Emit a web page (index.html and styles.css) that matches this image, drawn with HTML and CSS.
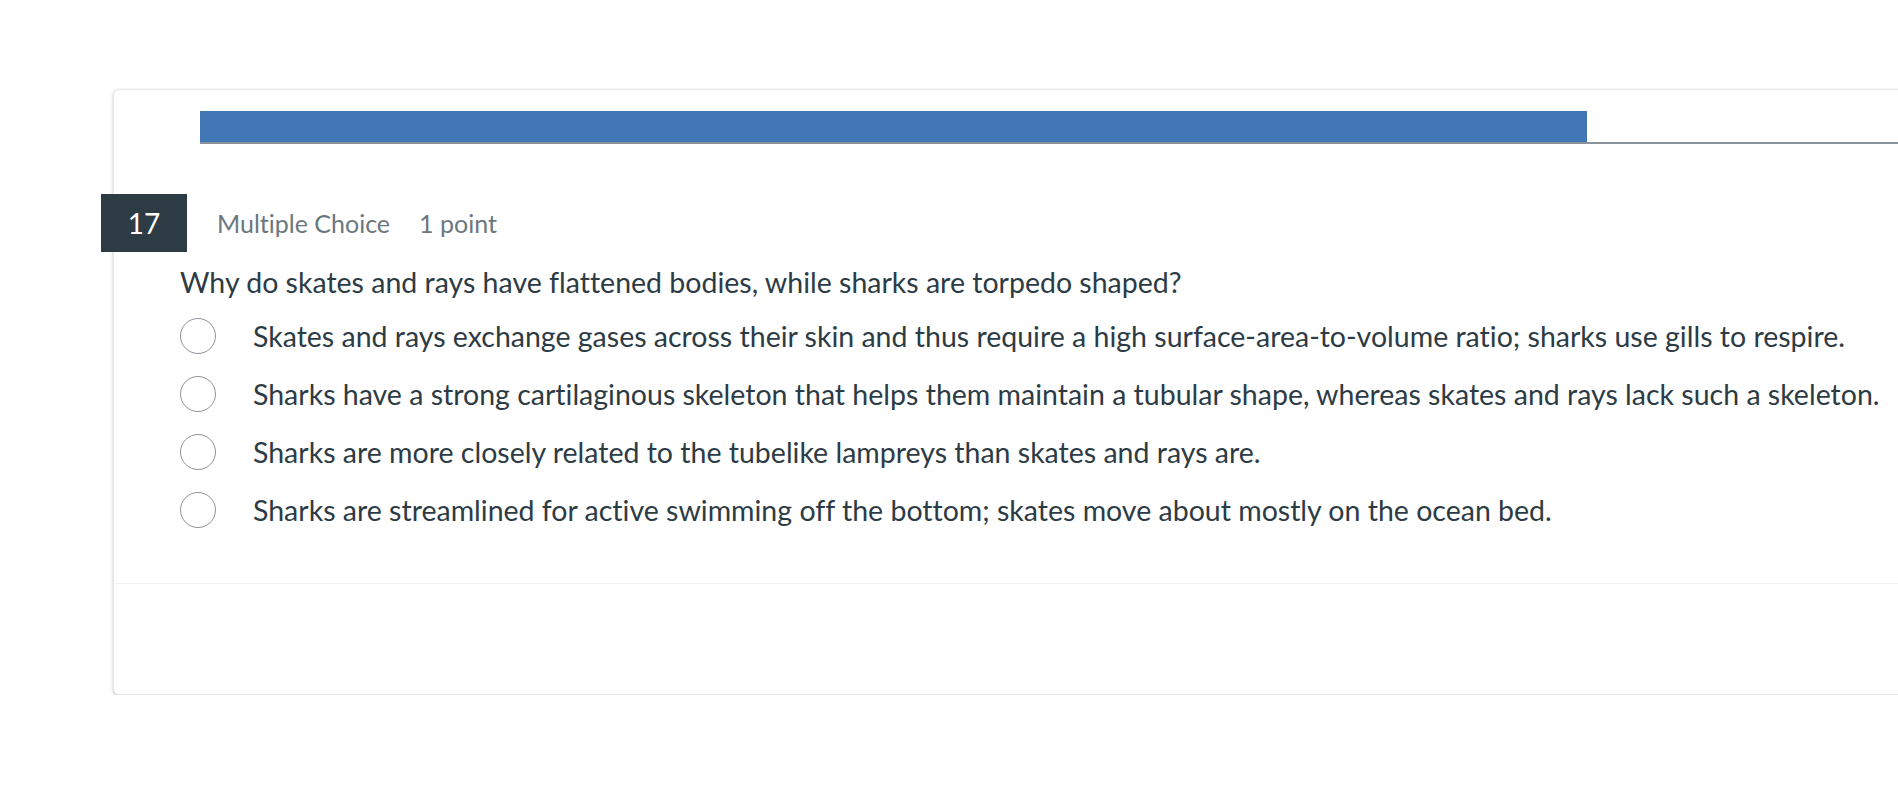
FILE: index.html
```html
<!DOCTYPE html>
<html lang="en">
<head>
    <meta charset="UTF-8">
    <title>Quiz - Question 17</title>
    <link rel="stylesheet" href="styles.css">
</head>
<body>

<div class="card">
    <div class="progress">
        <div class="progress-fill" style="width: 1387px;"></div>
    </div>

    <div class="question">
        <div class="question-header">
            <span class="number">17</span>
            <span class="meta">Multiple Choice</span>
            <span class="meta">1 point</span>
        </div>
        <p class="question-text">Why do skates and rays have flattened bodies, while sharks are torpedo shaped?</p>
        <ul class="answers">
            <li><span class="radio"></span>Skates and rays exchange gases across their skin and thus require a high surface-area-to-volume ratio; sharks use gills to respire.</li>
            <li><span class="radio"></span>Sharks have a strong cartilaginous skeleton that helps them maintain a tubular shape, whereas skates and rays lack such a skeleton.</li>
            <li><span class="radio"></span>Sharks are more closely related to the tubelike lampreys than skates and rays are.</li>
            <li><span class="radio"></span>Sharks are streamlined for active swimming off the bottom; skates move about mostly on the ocean bed.</li>
        </ul>
    </div>

    <div class="card-footer"></div>
</div>

</body>
</html>
```

FILE: styles.css
```css
body {
    font-family: Lato, "Open Sans", sans-serif;
    font-variant-ligatures: no-common-ligatures;
    background-color: #ffffff;
    color: #2d3b45;
    margin: 0;
    padding: 0;
    overflow: hidden;
}
.card {
    margin: 89px -40px 0 113px;
    border: 1px solid #e6e7e9;
    border-radius: 6px;
    box-shadow: 0 1px 3px rgba(0, 0, 0, 0.25);
    background: white;
}
.progress {
    margin: 21px 0 0 86px;
    height: 31px;
    border-bottom: 2px solid #8b9299;
}
.progress-fill {
    height: 31px;
    background-color: #4277b6;
}
.question {
    padding: 50px 0 44px 0;
}
.question-header {
    display: flex;
    align-items: center;
}
.number {
    width: 86px;
    height: 58px;
    margin-left: -13px;
    margin-right: 30px;
    background-color: #2d3b45;
    color: white;
    font-size: 28px;
    display: flex;
    align-items: center;
    justify-content: center;
}
.meta {
    font-size: 25px;
    color: #6b7780;
    margin-right: 29px;
}
.question-text {
    font-size: 28.5px;
    line-height: 34px;
    margin: 13px 0 0 66px;
}
.answers {
    list-style: none;
    margin: 8px 0 0 0;
    padding: 0 0 0 66px;
}
.answers li {
    display: flex;
    align-items: center;
    font-size: 28.5px;
    height: 58px;
}
.radio {
    width: 34px;
    height: 34px;
    border: 1px solid #8b9299;
    border-radius: 50%;
    margin-right: 37px;
    flex-shrink: 0;
}
.card-footer {
    border-top: 1px solid #f0f1f2;
    height: 110px;
}
```
